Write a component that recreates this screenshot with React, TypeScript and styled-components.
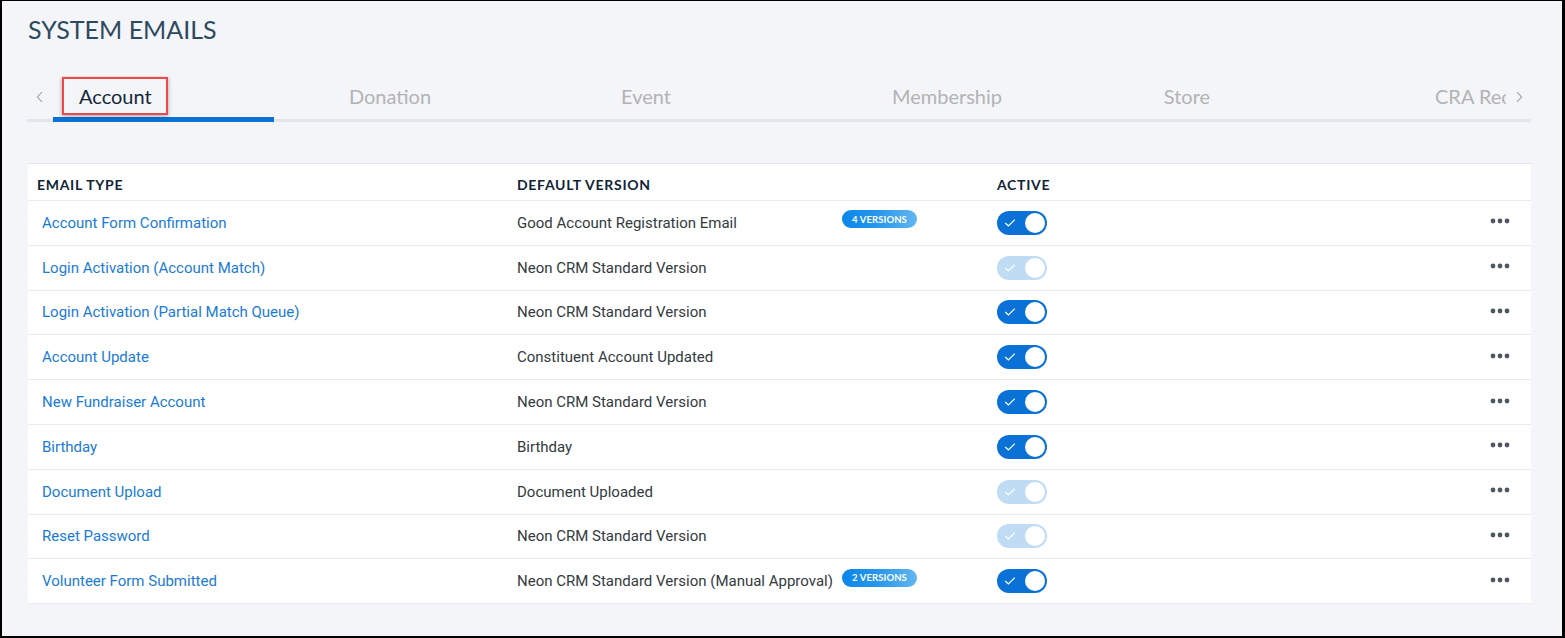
import React from "react";
import styled, { createGlobalStyle } from "styled-components";

const GlobalStyle = createGlobalStyle`
  html, body { margin: 0; padding: 0; background: #f4f5f9; }
  * { box-sizing: border-box; }
`;

const Frame = styled.div`
  width: 1565px;
  height: 638px;
  border-style: solid;
  border-color: #000;
  border-width: 1px 3px 2px 2px;
  background: #f4f5f9;
  padding: 12px 31px 0 25px;
  display: flex;
  flex-direction: column;
  overflow: hidden;
`;

const Title = styled.h1`
  margin: 0 0 0 1px;
  font-family: Lato, "Liberation Sans", sans-serif;
  font-weight: 400;
  font-size: 25px;
  line-height: 32px;
  color: #2d4a5f;
`;

const TabBar = styled.div`
  margin-top: 31px;
  height: 46px;
  display: flex;
  align-items: stretch;
  box-shadow: inset 0 -3px 0 #e3e5eb;
`;

const Chevron = styled.div<{ $side: "left" | "right" }>`
  width: ${(p) => (p.$side === "left" ? "26px" : "25px")};
  display: flex;
  align-items: center;
  justify-content: center;
  padding-bottom: 5px;
`;

const TabStrip = styled.div`
  flex: 1;
  display: flex;
  overflow: hidden;
  white-space: nowrap;
`;

const Tab = styled.div<{ $width: number; $active?: boolean; $pad?: number }>`
  flex: 0 0 ${(p) => p.$width}px;
  display: flex;
  align-items: center;
  justify-content: ${(p) => (p.$pad !== undefined ? "flex-start" : "center")};
  padding-left: ${(p) => (p.$pad !== undefined ? p.$pad : 0)}px;
  font-family: Lato, "Liberation Sans", sans-serif;
  font-size: 20px;
  color: ${(p) => (p.$active ? "#15283a" : "#b3b3b3")};
  border-bottom: 5px solid ${(p) => (p.$active ? "#0a72d6" : "transparent")};
  padding-bottom: 1px;
`;

const Highlight = styled.span`
  display: inline-block;
  border: 2px solid #f04848;
  padding: 5px 14px 5px 15px;
  box-shadow: 0 1px 4px rgba(0, 0, 0, 0.35);
  line-height: 24px;
`;

const Card = styled.div`
  margin-top: 41px;
  margin-left: 1px;
  background: #fff;
  border-top: 1px solid #e4e6ec;
`;

const Row = styled.div<{ $header?: boolean }>`
  display: grid;
  grid-template-columns: 480px 480px 1fr 60px;
  align-items: center;
  height: ${(p) => (p.$header ? "37px" : "44.8px")};
  border-bottom: 1px solid #e9ebf0;
  padding-top: ${(p) => (p.$header ? "5px" : "0")};
`;

const HeadCell = styled.div`
  padding-left: 9px;
  font-family: Lato, "Liberation Sans", sans-serif;
  font-weight: 700;
  font-size: 14px;
  letter-spacing: 0.7px;
  color: #0f2536;
`;

const Cell = styled.div`
  padding-left: 9px;
  display: flex;
  align-items: center;
  font-family: Roboto, "Liberation Sans", sans-serif;
  font-size: 15px;
  color: #333a40;
`;

const Link = styled.a`
  margin-left: 5px;
  color: #1a7bd6;
  text-decoration: none;
  font-family: Roboto, "Liberation Sans", sans-serif;
  font-size: 15px;
`;

const VersionText = styled.span`
  min-width: 316px;
`;

const Badge = styled.span`
  margin-left: 9px;
  margin-bottom: 7px;
  height: 18px;
  width: 75px;
  border-radius: 9px;
  background: linear-gradient(90deg, #0a86ea 0%, #2a98ec 50%, #62b6ef 100%);
  color: #fff;
  font-family: Lato, "Liberation Sans", sans-serif;
  font-weight: 700;
  font-size: 9.5px;
  display: flex;
  align-items: center;
  justify-content: center;
  letter-spacing: 0.1px;
`;

const Toggle = styled.div<{ $disabled?: boolean }>`
  width: 50px;
  height: 24px;
  border-radius: 12px;
  background: ${(p) => (p.$disabled ? "#c0dcf4" : "#0a72d6")};
  display: flex;
  align-items: center;
  justify-content: space-between;
  padding: 0 2px 0 7px;
`;

const Knob = styled.span`
  width: 20px;
  height: 20px;
  border-radius: 50%;
  background: #fff;
`;

const MoreCell = styled.div`
  display: flex;
  justify-content: flex-start;
  padding-left: 19px;
  padding-bottom: 3px;
`;

const Dots = () => (
  <svg width="20" height="6" viewBox="0 0 20 6">
    <circle cx="3" cy="3" r="2.4" fill="#4f5862" />
    <circle cx="10" cy="3" r="2.4" fill="#4f5862" />
    <circle cx="17" cy="3" r="2.4" fill="#4f5862" />
  </svg>
);

const Check = () => (
  <svg width="12" height="10" viewBox="0 0 12 10">
    <path d="M1.2 5 L4.4 8 L10.8 1.6" fill="none" stroke="#fff" strokeWidth="1.2" />
  </svg>
);

type Item = { type: string; version: string; badge?: string; disabled?: boolean };

const items: Item[] = [
  { type: "Account Form Confirmation", version: "Good Account Registration Email", badge: "4 VERSIONS" },
  { type: "Login Activation (Account Match)", version: "Neon CRM Standard Version", disabled: true },
  { type: "Login Activation (Partial Match Queue)", version: "Neon CRM Standard Version" },
  { type: "Account Update", version: "Constituent Account Updated" },
  { type: "New Fundraiser Account", version: "Neon CRM Standard Version" },
  { type: "Birthday", version: "Birthday" },
  { type: "Document Upload", version: "Document Uploaded", disabled: true },
  { type: "Reset Password", version: "Neon CRM Standard Version", disabled: true },
  { type: "Volunteer Form Submitted", version: "Neon CRM Standard Version (Manual Approval)", badge: "2 VERSIONS" },
];

const tabs = [
  { label: "Donation", width: 232 },
  { label: "Event", width: 280 },
  { label: "Membership", width: 322 },
  { label: "Store", width: 158 },
];

export default function App() {
  return (
    <>
      <GlobalStyle />
      <Frame>
        <Title>SYSTEM EMAILS</Title>
        <TabBar>
          <Chevron $side="left">
            <svg width="8" height="12" viewBox="0 0 8 12">
              <path d="M6 1 L1.5 6 L6 11" fill="none" stroke="#9a9a9a" strokeWidth="1.1" />
            </svg>
          </Chevron>
          <TabStrip>
            <Tab $width={221} $active $pad={9}>
              <Highlight>Account</Highlight>
            </Tab>
            {tabs.map((t) => (
              <Tab key={t.label} $width={t.width}>
                {t.label}
              </Tab>
            ))}
            <Tab $width={300} $pad={169}>
              CRA Receipt
            </Tab>
          </TabStrip>
          <Chevron $side="right">
            <svg width="8" height="12" viewBox="0 0 8 12">
              <path d="M2 1 L6.5 6 L2 11" fill="none" stroke="#9a9a9a" strokeWidth="1.1" />
            </svg>
          </Chevron>
        </TabBar>
        <Card>
          <Row $header>
            <HeadCell>EMAIL TYPE</HeadCell>
            <HeadCell>DEFAULT VERSION</HeadCell>
            <HeadCell>ACTIVE</HeadCell>
            <div />
          </Row>
          {items.map((it) => (
            <Row key={it.type}>
              <Cell>
                <Link href="#">{it.type}</Link>
              </Cell>
              <Cell>
                <VersionText>{it.version}</VersionText>
                {it.badge && <Badge>{it.badge}</Badge>}
              </Cell>
              <Cell>
                <Toggle $disabled={it.disabled}>
                  <Check />
                  <Knob />
                </Toggle>
              </Cell>
              <MoreCell>
                <Dots />
              </MoreCell>
            </Row>
          ))}
        </Card>
      </Frame>
    </>
  );
}
